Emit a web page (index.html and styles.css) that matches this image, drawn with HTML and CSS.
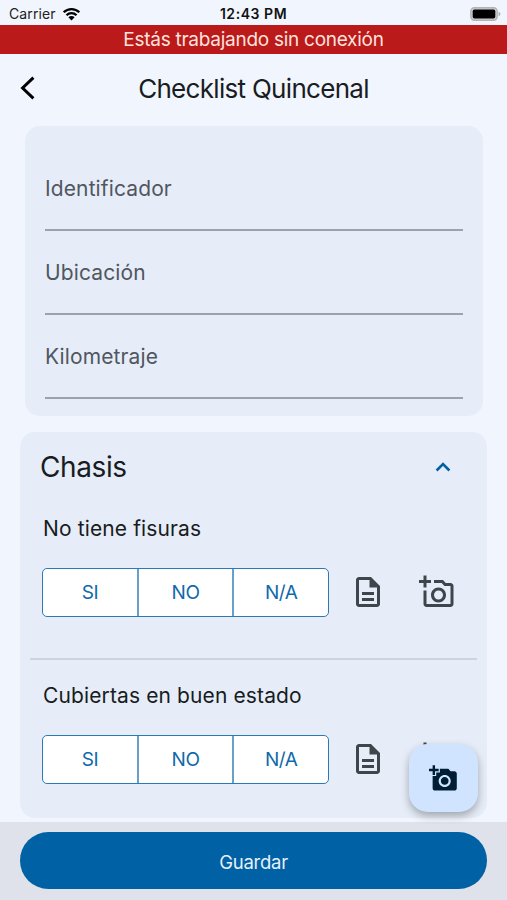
FILE: index.html
```html
<!DOCTYPE html>
<html lang="es">
<head>
  <meta charset="UTF-8">
  <title>Checklist Quincenal</title>
  <meta name="viewport" content="width=device-width, initial-scale=1.0">
  <link rel="stylesheet" href="styles.css">
</head>
<body>
  <!-- shared icons -->
  <svg class="sprite" aria-hidden="true">
    <symbol id="ic-note" viewBox="0 0 24 24">
      <path d="M8 16h8v2H8zm0-4h8v2H8zm6-10H6c-1.1 0-2 .9-2 2v16c0 1.1.89 2 1.99 2H18c1.1 0 2-.9 2-2V8l-6-6zm4 18H6V4h7v5h5v11z"/>
    </symbol>
    <symbol id="ic-photo" viewBox="0 0 24 24">
      <path d="M21 6h-3.17L16 4h-6v2h5.12l1.83 2H21v12H5v-9H3v9c0 1.1.9 2 2 2h16c1.1 0 2-.9 2-2V8c0-1.1-.9-2-2-2zM8 14c0 2.76 2.24 5 5 5s5-2.24 5-5-2.24-5-5-5-5 2.24-5 5zm5-3c1.65 0 3 1.35 3 3s-1.35 3-3 3-3-1.35-3-3 1.35-3 3-3zM5 6h3V4H5V1H3v3H0v2h3v3h2z"/>
    </symbol>
  </svg>

  <div class="status-bar">
    <div class="carrier">
      <span>Carrier</span>
      <svg class="wifi" viewBox="0 0 18 14">
        <path d="M1.2 5.3a11 11 0 0 1 15.6 0M4 8.3a7 7 0 0 1 10 0" fill="none" stroke="#000" stroke-width="2.3"/>
        <path d="M9 13.4 5.9 10.2a4.4 4.4 0 0 1 6.2 0z"/>
      </svg>
    </div>
    <div class="clock">12:43 PM</div>
    <div class="power">
      <svg class="battery" viewBox="0 0 31 14">
        <rect x=".8" y=".8" width="26.4" height="12.4" rx="3.6" fill="#ccc" stroke="#b3b4b7" stroke-width="1.4"/>
        <rect x="2.7" y="2.5" width="22.6" height="9" rx="1.8"/>
        <path d="M28.6 4.8c2.4.8 2.4 3.6 0 4.4z" fill="#a9aaac"/>
      </svg>
    </div>
  </div>
  <div class="offline">Estás trabajando sin conexión</div>

  <header class="top-nav">
    <a href="#" class="back" aria-label="Volver">
      <svg viewBox="0 0 16 24"><path d="M13.4 1.6 2.6 12l10.8 10.4"/></svg>
    </a>
    <h1>Checklist Quincenal</h1>
  </header>

  <main>
    <div class="card fields">
      <div class="field">Identificador</div>
      <div class="field">Ubicación</div>
      <div class="field">Kilometraje</div>
    </div>

    <div class="card section">
      <div class="section-head">
        <h2>Chasis</h2>
        <svg class="chevron" viewBox="0 0 16 10"><path d="M1.6 8.5 8 2.1l6.4 6.4"/></svg>
      </div>

      <div class="item">
        <div class="question">No tiene fisuras</div>
        <div class="answer">
          <div class="choices">
            <div class="choice">SI</div>
            <div class="choice">NO</div>
            <div class="choice">N/A</div>
          </div>
          <svg class="icon"><use href="#ic-note"/></svg>
          <svg class="icon photo"><use href="#ic-photo"/></svg>
        </div>
      </div>

      <div class="item">
        <div class="question">Cubiertas en buen estado</div>
        <div class="answer">
          <div class="choices">
            <div class="choice">SI</div>
            <div class="choice">NO</div>
            <div class="choice">N/A</div>
          </div>
          <svg class="icon"><use href="#ic-note"/></svg>
          <svg class="icon photo"><use href="#ic-photo"/></svg>
        </div>
      </div>
    </div>
  </main>

  <footer class="bottom-bar">
    <button class="btn-save">Guardar</button>
  </footer>

  <button class="fab" aria-label="Agregar foto">
    <svg viewBox="0 0 24 24"><path d="M3 4V1h2v3h3v2H5v3H3V6H0V4h3zm3 6V7h3V4h7l1.83 2H21c1.1 0 2 .9 2 2v12c0 1.1-.9 2-2 2H5c-1.1 0-2-.9-2-2V10h3zm7 9c2.76 0 5-2.24 5-5s-2.24-5-5-5-5 2.24-5 5 2.24 5 5 5zm-3.2-5c0 1.77 1.43 3.2 3.2 3.2s3.2-1.43 3.2-3.2-1.43-3.2-3.2-3.2-3.2 1.43-3.2 3.2z"/></svg>
  </button>
</body>
</html>
```

FILE: styles.css
```css
*{box-sizing:border-box;margin:0;padding:0}
body,html{height:100%}
body{
  display:flex;flex-direction:column;
  font-family:Inter,"Liberation Sans",sans-serif;
  background:#f1f5fe;color:#191c20;
  overflow:hidden;
}
.sprite{display:none}

.status-bar{
  flex:none;height:25px;padding:2px 6px 0 9px;
  display:grid;grid-template-columns:1fr auto 1fr;align-items:center;
  font-size:14px;color:#222;
}
.carrier{display:flex;align-items:center;gap:6px;letter-spacing:0.1px}
.wifi{width:19px;height:14px}
.clock{font-weight:600;color:#111;letter-spacing:0.55px;margin-right:3px}
.power{display:flex;justify-content:flex-end}
.battery{width:31px;height:14px}

.offline{
  flex:none;height:29px;line-height:30px;
  background:#ba1a1a;color:#ffe3df;
  text-align:center;font-size:19px;letter-spacing:-0.27px;
}

.top-nav{
  flex:none;height:72px;padding:0 20px 4px;
  display:grid;grid-template-columns:16px 1fr 16px;align-items:center;
}
.back{display:flex}
.back svg{width:16px;height:24px;fill:none;stroke:#000;stroke-width:3}
.top-nav h1{font-size:26px;font-weight:400;text-align:center;letter-spacing:-0.7px}

main{flex:1;min-height:0;padding:0 20px}
.card{background:#e6edf8;border-radius:15px}
.fields{margin:0 4px 16px 5px;padding:21px 20px 18px;height:290px}
.field{
  height:84px;line-height:83px;
  border-bottom:2px solid #9aa2b0;
  font-size:21px;color:#51565f;letter-spacing:0.12px;
}

.section{height:386px;padding:0 10px}
.section-head{
  height:70px;padding:0 26px 0 10px;
  display:flex;justify-content:space-between;align-items:center;
}
.section-head h2{font-size:28px;font-weight:400;letter-spacing:-0.4px}
.chevron{width:16px;height:10px;fill:none;stroke:#0061a4;stroke-width:2.6}
.item{height:156px;padding:13px 12px 0}
.item + .item{height:167px;border-top:2px solid #cdd4df;padding-top:22px}
.question{height:28px;line-height:28px;font-size:21px;letter-spacing:0.12px;padding-left:1px}
.answer{display:flex;align-items:center;margin-top:25px}
.choices{
  width:287px;height:49px;display:flex;
  background:#fff;border:1.5px solid #2b7ab5;border-radius:5px;
}
.choice{
  flex:1;display:flex;align-items:center;justify-content:center;
  font-size:19px;color:#0f69ab;letter-spacing:-0.5px;
}
.choice + .choice{border-left:2px solid #66a0cb}
.icon{width:36px;height:36px;margin:0 0 2px 20.5px;fill:#40444b}
.icon.photo{margin-left:33px}

.bottom-bar{flex:none;height:78px;padding:10px 20px 0;background:#dfe2eb}
.btn-save{
  display:block;width:100%;height:57px;padding-top:2px;
  background:#0061a4;color:#e6f0fb;
  border:none;border-radius:29px;
  font-family:inherit;font-size:18.5px;letter-spacing:-0.25px;cursor:pointer;
}
.fab{
  position:absolute;right:29px;bottom:88px;
  width:69px;height:68px;
  display:flex;align-items:center;justify-content:center;
  background:#d1e4ff;border:none;border-radius:19px;
  box-shadow:0 4px 8px rgba(0,0,0,0.3);
}
.fab svg{width:29px;height:29px;fill:#001d36}
```
